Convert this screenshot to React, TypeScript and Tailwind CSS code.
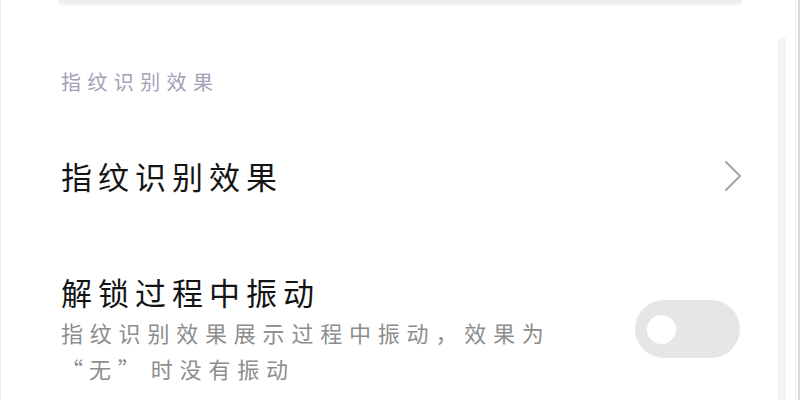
export default function App() {
  return (
    <div
      className="relative w-[800px] h-[400px] overflow-hidden bg-white border-l border-[#ececec]"
      style={{ fontFamily: '"Noto Sans CJK SC", "Noto Sans", sans-serif' }}
      lang="zh-CN"
    >
      {/* bottom edge of the card above */}
      <div className="mx-[58px] h-[4px] bg-[#efefef] rounded-b-[3px] shadow-[0_1px_2px_rgba(0,0,0,0.06)]" />

      <div className="pl-[60px] pr-[58px]">
        <div className="mt-[63px] text-[20px] leading-[30px] tracking-[6.4px] text-[#a4a1b6]">
          指纹识别效果
        </div>

        <div className="mt-[59px] flex items-center justify-between h-[40px]">
          <span className="text-[31px] leading-[40px] tracking-[6px] text-[#141414]">指纹识别效果</span>
          <svg width="18" height="32" viewBox="0 0 18 32" fill="none">
            <polyline points="2,2 16,16 2,30" stroke="#a3a3a3" strokeWidth="2" strokeLinecap="round" strokeLinejoin="round" />
          </svg>
        </div>

        <div className="mt-[76px] flex items-center justify-between">
          <div>
            <div className="text-[31px] leading-[40px] tracking-[6px] text-[#141414]">解锁过程中振动</div>
            <div className="mt-[2px] text-[22px] leading-[36px] tracking-[6.8px] text-[#8d8d8d] w-[520px]">
              <div>指纹识别效果展示过程中振动，效果为</div>
              <div>
                <span className="inline-block w-[28px] text-right">“</span>无<span className="inline-block w-[33px]">”</span>时没有振动
              </div>
            </div>
          </div>
          <div className="mr-[2px] w-[105px] h-[58px] rounded-full bg-[#e6e6e6] flex items-center pl-[12px]">
            <div className="w-[29px] h-[29px] rounded-full bg-white" />
          </div>
        </div>
      </div>

      {/* scroll indicator and right edge */}
      <div className="absolute right-[14px] top-[38px] bottom-0 w-[8px] bg-[#f8f2f4]" />
      <div className="absolute right-[4px] top-0 bottom-0 w-px bg-[#eeeeee]" />
      <div className="absolute right-0 top-0 bottom-0 w-[2px] bg-[#dcdcdc]" />
    </div>
  );
}
